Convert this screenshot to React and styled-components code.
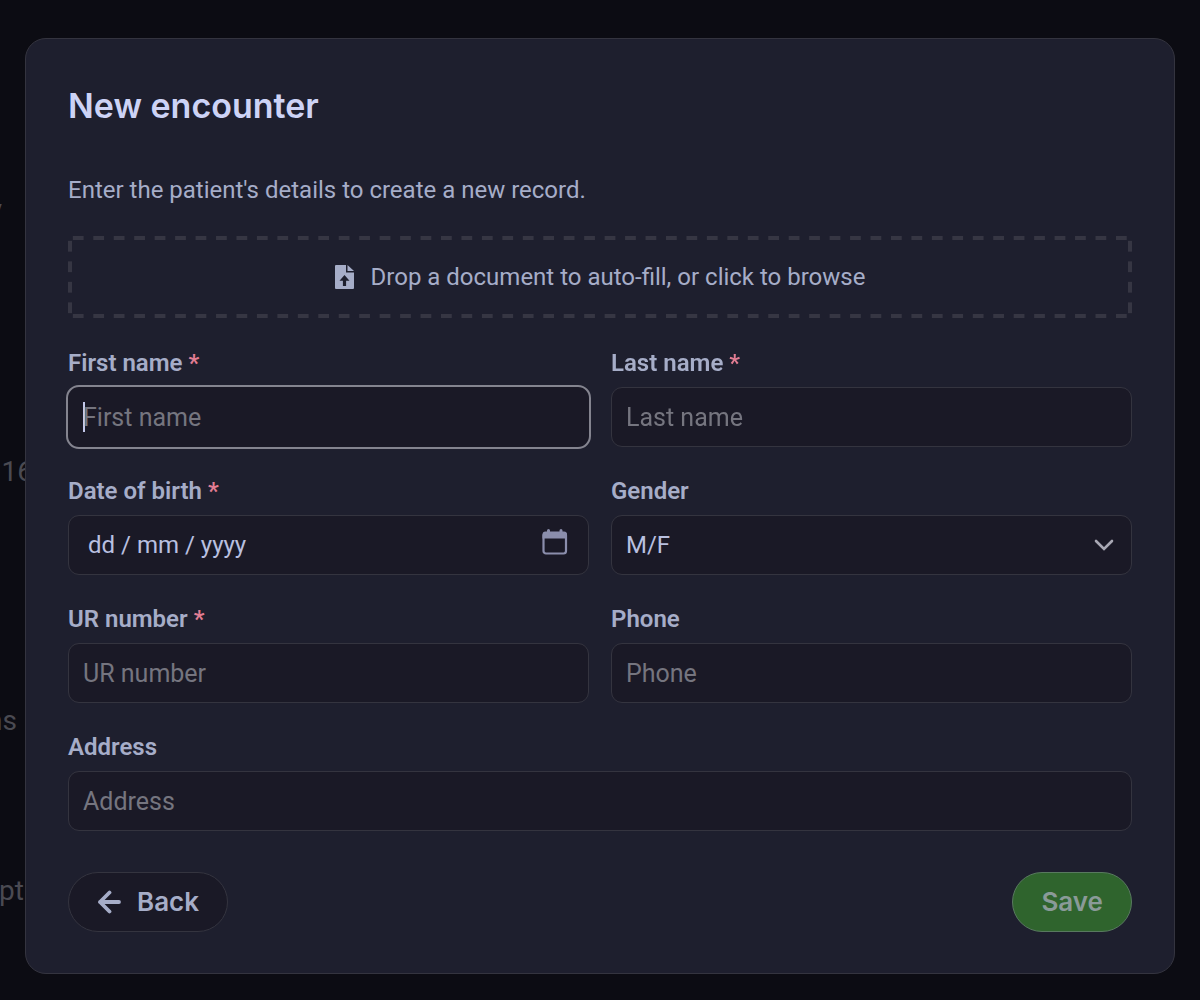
import React, { useId } from 'react';
import styled, { createGlobalStyle, css } from 'styled-components';

const GlobalStyle = createGlobalStyle`
  *, *::before, *::after {
    box-sizing: border-box;
  }
  body {
    margin: 0;
    background: #0c0c13;
    color: #a6adc8;
    font-family: Roboto, "Liberation Sans", sans-serif;
    font-size: 24px;
    line-height: 32px;
  }
  input, select, button {
    font: inherit;
    margin: 0;
  }
`;

const Screen = styled.div`
  display: grid;
  min-height: 100vh;
  overflow: hidden;
  background: #0c0c13;
  > * {
    grid-area: 1 / 1;
    min-width: 0;
  }
`;

/* page dimmed behind the dialog */
const Underlay = styled.div`
  display: flex;
  flex-direction: column;
  padding-top: 194px;
  color: #4a4a52;
  font-size: 28px;
  line-height: 32px;
`;

const Scrap = styled.span`
  display: flex;
  justify-content: flex-end;
  width: ${(props) => props.$width}px;
  height: 32px;
  margin-bottom: ${(props) => props.$below || 0}px;
  overflow: hidden;
`;

const Dialog = styled.form`
  align-self: start;
  margin: 38px 25px 25px;
  padding: 42px 42px 41px;
  background: #1e1f2e;
  border: 1px solid #34343f;
  border-radius: 21px;
`;

const Title = styled.h1`
  margin: 0 0 43px;
  color: #cdd3f6;
  font-family: Inter, "Liberation Sans", sans-serif;
  font-size: 34px;
  font-weight: 600;
  line-height: 50px;
`;

const Intro = styled.p`
  margin: 0 0 30px;
`;

const dash = (angle) =>
  `linear-gradient(${angle}, transparent 25%, #363643 25%, #363643 75%, transparent 75%)`;

const DropZone = styled.button`
  display: flex;
  align-items: center;
  justify-content: center;
  gap: 16px;
  width: 100%;
  height: 82px;
  padding: 0;
  /* long dashes along the four edges */
  background-color: transparent;
  background-image: ${dash('90deg')}, ${dash('90deg')}, ${dash('180deg')}, ${dash('180deg')};
  background-position: 0 0, 0 100%, 0 0, 100% 0;
  background-repeat: repeat-x, repeat-x, repeat-y, repeat-y;
  background-size: calc(100% / 52) 4px, calc(100% / 52) 4px, 4px calc(100% / 4), 4px calc(100% / 4);
  border: 0;
  color: #a6adc8;
  cursor: pointer;
`;

const Fields = styled.div`
  display: grid;
  grid-template-columns: 1fr 1fr;
  gap: 30px 22px;
  margin: 31px 0 41px;
`;

const FieldWrapper = styled.div`
  display: flex;
  flex-direction: column;
  gap: 10px;
  min-width: 0;
  grid-column: ${(props) => (props.$wide ? '1 / -1' : 'auto')};
`;

const Label = styled.label`
  color: #a6adc8;
  font-weight: 600;
  line-height: 28px;
`;

const Required = styled.span`
  color: #e27d93;
`;

const control = css`
  width: 100%;
  height: 60px;
  background: #1a1926;
  border: 1px solid #34343f;
  border-radius: 11px;
  color: #b9c0e0;
`;

const Input = styled.input`
  ${control}
  padding: 0 14px;
  font-size: 25px;
  caret-color: #cdd3f6;
  &::placeholder {
    color: #75757f;
    opacity: 1;
  }
  &:focus {
    border-color: #1a1926;
    outline: 2px solid #84848f;
  }
  /* steady, taller caret while the field is empty */
  &:focus:placeholder-shown {
    caret-color: transparent;
    background: linear-gradient(#c3c8ea, #c3c8ea) 14px 50% / 2px 30px no-repeat #1a1926;
  }
`;

const DateBox = styled.div`
  ${control}
  display: flex;
  align-items: center;
  padding: 0 20px 0 19px;
`;

const DateInput = styled.input`
  flex: 1;
  min-width: 0;
  padding: 0;
  background: none;
  border: 0;
  outline: 0;
  color: #b9c0e0;
  &::placeholder {
    color: #b9c0e0;
    opacity: 1;
  }
`;

const CalendarButton = styled.button`
  display: flex;
  padding: 0 0 6px;
  background: none;
  border: 0;
  color: #8b8eac;
  cursor: pointer;
`;

const SelectBox = styled.div`
  display: grid;
  align-items: center;
  > * {
    grid-area: 1 / 1;
  }
  > svg {
    justify-self: end;
    margin-right: 18px;
    pointer-events: none;
  }
`;

const Select = styled.select`
  ${control}
  padding: 0 14px;
  appearance: none;
`;

const Actions = styled.div`
  display: flex;
  justify-content: space-between;
`;

const Button = styled.button`
  display: flex;
  align-items: center;
  gap: 16px;
  height: 60px;
  padding: 0 28px;
  background: #1a1926;
  border: 1px solid #34343f;
  border-radius: 30px;
  color: #a6adc8;
  font-family: Inter, "Liberation Sans", sans-serif;
  font-size: 26px;
  font-weight: 600;
  cursor: pointer;
`;

const SaveButton = styled(Button)`
  background: #2f642d;
  border-color: #58795f;
  color: #8a9a98;
  cursor: default;
`;

function FileUploadIcon() {
  return (
    <svg width="20" height="24" viewBox="0 0 20 24" fill="currentColor" aria-hidden="true">
      <path fillRule="evenodd" d="M1 0h10v7.500h8V23a1 1 0 0 1-1 1H1a1 1 0 0 1-1-1V1a1 1 0 0 1 1-1zM9.500 10L4.500 15.700h3.400V21h3.200v-5.300h3.400z" />
      <path d="M12.500 0l6.500 6h-6.500z" />
    </svg>
  );
}

function CalendarIcon() {
  return (
    <svg width="26" height="26" viewBox="0 0 26 26" aria-hidden="true">
      <rect x="1.500" y="4" width="22.500" height="20.500" rx="2.500" fill="none" stroke="currentColor" strokeWidth="2.200" />
      <path d="M.5 9.500V5.500a3 3 0 0 1 3-3h1.500V1.500a1.500 1.500 0 0 1 3 0v1h9.500v-1a1.500 1.500 0 0 1 3 0v1H22a3 3 0 0 1 3 3v4z" fill="currentColor" />
    </svg>
  );
}

function ChevronIcon() {
  return (
    <svg width="20" height="12" viewBox="0 0 20 12" fill="none" aria-hidden="true">
      <path d="M2 2l8 8 8-8" stroke="#a8a8b4" strokeWidth="2.600" strokeLinecap="round" />
    </svg>
  );
}

function ArrowLeftIcon() {
  return (
    <svg width="24" height="24" viewBox="0 0 24 24" fill="none" aria-hidden="true">
      <path d="M22 12H3M12.500 2.500L3 12l9.500 9.500" stroke="currentColor" strokeWidth="3.800" strokeLinecap="round" strokeLinejoin="round" />
    </svg>
  );
}

function Field({ label, required, wide, autoFocus, render }) {
  const id = useId();
  return (
    <FieldWrapper $wide={wide}>
      <Label htmlFor={id}>
        {label}
        {required && <Required> *</Required>}
      </Label>
      {render ? render(id) : <Input id={id} placeholder={label} autoFocus={autoFocus} />}
    </FieldWrapper>
  );
}

export default function App() {
  return (
    <Screen>
      <GlobalStyle />
      <Underlay aria-hidden="true">
        <Scrap $width={2} $below={230}>y</Scrap>
        <Scrap $width={33} $below={217}>16</Scrap>
        <Scrap $width={17} $below={138}>ns</Scrap>
        <Scrap $width={24}>pt</Scrap>
      </Underlay>
      <Dialog role="dialog" aria-labelledby="dialog-title" onSubmit={(e) => e.preventDefault()}>
        <Title id="dialog-title">New encounter</Title>
        <Intro>Enter the patient's details to create a new record.</Intro>
        <DropZone type="button">
          <FileUploadIcon />
          Drop a document to auto-fill, or click to browse
        </DropZone>
        <Fields>
          <Field label="First name" required autoFocus />
          <Field label="Last name" required />
          <Field
            label="Date of birth"
            required
            render={(id) => (
              <DateBox>
                <DateInput id={id} placeholder="dd / mm / yyyy" inputMode="numeric" />
                <CalendarButton type="button" aria-label="Open calendar">
                  <CalendarIcon />
                </CalendarButton>
              </DateBox>
            )}
          />
          <Field
            label="Gender"
            render={(id) => (
              <SelectBox>
                <Select id={id} defaultValue="M/F">
                  <option>M/F</option>
                  <option>M</option>
                  <option>F</option>
                </Select>
                <ChevronIcon />
              </SelectBox>
            )}
          />
          <Field label="UR number" required />
          <Field label="Phone" />
          <Field label="Address" wide />
        </Fields>
        <Actions>
          <Button type="button">
            <ArrowLeftIcon />
            Back
          </Button>
          <SaveButton type="submit" disabled>
            Save
          </SaveButton>
        </Actions>
      </Dialog>
    </Screen>
  );
}
